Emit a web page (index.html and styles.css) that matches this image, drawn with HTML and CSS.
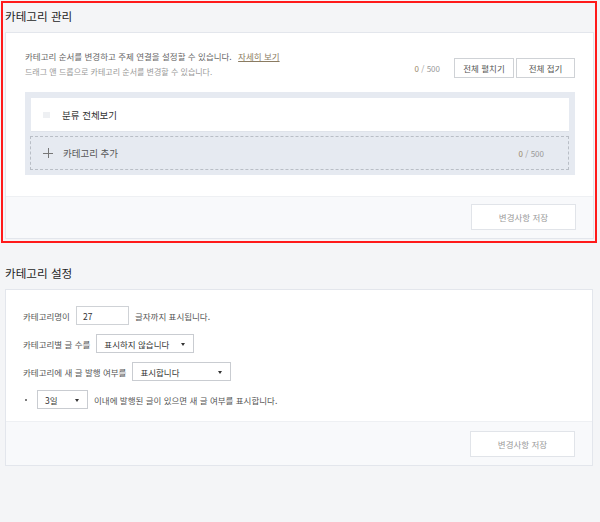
FILE: index.html
```html
<!DOCTYPE html>
<html lang="ko">
<head>
<meta charset="utf-8">
<link rel="stylesheet" href="styles.css">
</head>
<body>
<section class="panel panel-focus">
  <h2 class="panel-title">카테고리 관리</h2>
  <div class="card">
    <div class="card-body manage-body">
      <div class="manage-head">
        <div class="manage-desc">
          <p class="desc-main">카테고리 순서를 변경하고 주제 연결을 설정할 수 있습니다. <a class="more-link">자세히 보기</a></p>
          <p class="desc-sub">드래그 앤 드롭으로 카테고리 순서를 변경할 수 있습니다.</p>
        </div>
        <div class="manage-tools">
          <span class="count"><em>0</em> / 500</span>
          <button class="btn-sm">전체 펼치기</button>
          <button class="btn-sm">전체 접기</button>
        </div>
      </div>
      <div class="tree">
        <div class="tree-item">
          <span class="handle"></span>
          <span class="tree-name">분류 전체보기</span>
        </div>
        <div class="tree-add">
          <span class="plus"></span>
          <span class="add-label">카테고리 추가</span>
          <span class="count add-count"><em>0</em> / 500</span>
        </div>
      </div>
    </div>
    <div class="card-foot">
      <button class="btn-save">변경사항 저장</button>
    </div>
  </div>
</section>

<section class="panel panel-second">
  <h2 class="panel-title">카테고리 설정</h2>
  <div class="card">
    <div class="card-body settings-body">
      <div class="row">
        <span class="label">카테고리명이</span>
        <span class="input">27</span>
        <span class="label">글자까지 표시됩니다.</span>
      </div>
      <div class="row">
        <span class="label">카테고리별 글 수를</span>
        <span class="select sel-count">표시하지 않습니다<i class="caret"></i></span>
      </div>
      <div class="row">
        <span class="label">카테고리에 새 글 발행 여부를</span>
        <span class="select sel-new">표시합니다<i class="caret"></i></span>
      </div>
      <div class="row row-sub">
        <span class="dot"></span>
        <span class="select sel-days">3일<i class="caret"></i></span>
        <span class="label">이내에 발행된 글이 있으면 새 글 여부를 표시합니다.</span>
      </div>
    </div>
    <div class="card-foot foot-2">
      <button class="btn-save">변경사항 저장</button>
    </div>
  </div>
</section>
</body>
</html>
```

FILE: styles.css
```css
* { box-sizing: border-box; }
html, body { margin: 0; padding: 0; }
body {
  width: 600px;
  height: 522px;
  background: #f4f5f7;
  font-family: "Noto Sans CJK KR", "Noto Sans", sans-serif;
  color: #555;
  overflow: hidden;
}
p { margin: 0; }
button { font-family: inherit; cursor: pointer; }

.panel-focus {
  margin: 1px 3px 0 1px;
  border: 2px solid #ff1a1a;
  padding: 0 1px 2px 2px;
}
.panel-second {
  padding: 17px 7px 0 5px;
}
.panel-title {
  margin: 0;
  font-size: 11.6px;
  font-weight: 400;
  color: #1e1e1e;
  line-height: 26px;
  height: 29px;
  padding-bottom: 3px;
}

.card {
  background: #fff;
  border: 1px solid #e3e6ec;
}
.card-body { background: #fff; }
.manage-body { padding: 15px 18px 21px 19px; }

.manage-head {
  display: flex;
  justify-content: space-between;
  align-items: flex-start;
}
.desc-main {
  font-size: 8.5px;
  line-height: 16px;
  color: #666;
}
.more-link {
  margin-left: 4px;
  color: #8a7b62;
  text-decoration: underline;
}
.desc-sub {
  font-size: 8px;
  line-height: 16px;
  color: #999;
}
.manage-tools {
  display: flex;
  align-items: center;
  margin-top: 10px;
  gap: 2px;
}
.count {
  font-size: 8px;
  color: #999;
  margin-right: 12px;
}
.count em { font-style: normal; color: #9a8868; }
.btn-sm {
  height: 20px;
  padding: 0;
  width: 60px;
  background: #fff;
  border: 1px solid #cfd2d6;
  font-size: 8.5px;
  color: #555;
}
.btn-sm + .btn-sm { width: 59px; }

.tree {
  margin-top: 12px;
  background: #e6eaf1;
  padding: 6px 6px 5px 5px;
  display: flex;
  flex-direction: column;
  gap: 4px;
}
.tree-item {
  margin-left: 1px;
  height: 34px;
  background: #fff;
  border-bottom: 1px solid #dfe3ea;
  display: flex;
  align-items: center;
  padding-left: 12px;
}
.handle {
  width: 7px;
  height: 6px;
  background: #eef0f3;
  margin-right: 12px;
}
.tree-name {
  font-size: 9.5px;
  color: #333;
}
.tree-add {
  height: 34px;
  border: 1px dashed #b9bec6;
  display: flex;
  align-items: center;
  padding-left: 12px;
  padding-right: 24px;
}
.plus {
  position: relative;
  width: 10px;
  height: 10px;
  margin-right: 10px;
}
.plus::before, .plus::after {
  content: "";
  position: absolute;
  background: #777;
}
.plus::before { left: 0; right: 0; top: 4.5px; height: 1px; }
.plus::after { top: 0; bottom: 0; left: 4.5px; width: 1px; }
.add-label {
  font-size: 9.5px;
  color: #555;
  flex: 1;
}
.add-count { margin-right: 0; }

.card-foot {
  background: #f8f9fb;
  border-top: 1px solid #eef0f3;
  display: flex;
  justify-content: flex-end;
  padding: 7px 17px 8px 0;
}
.btn-save {
  width: 105px;
  height: 26px;
  padding: 0;
  background: #fff;
  border: 1px solid #e1e4e9;
  font-size: 8.5px;
  color: #999;
}
.foot-2 { padding: 9px 17px 8px 0; }

.settings-body {
  padding: 16px 16px 12px 17px;
  display: flex;
  flex-direction: column;
  gap: 9px;
}
.row {
  display: flex;
  align-items: center;
  height: 19px;
  gap: 6px;
}
.label {
  font-size: 8.5px;
  color: #555;
}
.input {
  width: 53px;
  height: 19px;
  border: 1px solid #cfd2d6;
  font-size: 8.5px;
  color: #333;
  padding-left: 6px;
  display: flex;
  align-items: center;
}
.select {
  position: relative;
  height: 19px;
  border: 1px solid #c9ccd1;
  background: #fff;
  font-size: 8.5px;
  color: #333;
  display: flex;
  align-items: center;
  padding-left: 7px;
}
.caret {
  position: absolute;
  right: 8px;
  top: 8px;
  width: 0;
  height: 0;
  border-left: 2.5px solid transparent;
  border-right: 2.5px solid transparent;
  border-top: 3px solid #333;
}
.sel-count { width: 98px; }
.sel-new { width: 99px; }
.sel-days { width: 51px; }
.row-sub { padding-left: 2px; }
.dot {
  width: 2px;
  height: 2px;
  background: #555;
  border-radius: 50%;
  margin-right: 4px;
}
```
